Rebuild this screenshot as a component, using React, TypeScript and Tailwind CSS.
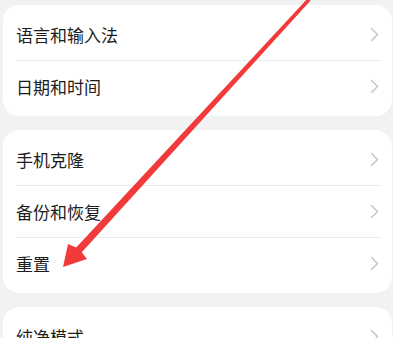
import { Fragment } from 'react';

interface Group {
  items: string[];
}

const GROUPS: Group[] = [
  { items: ['语言和输入法', '日期和时间'] },
  { items: ['手机克隆', '备份和恢复', '重置'] },
  { items: ['纯净模式'] },
];

function Chevron() {
  return (
    <svg width="9" height="15" viewBox="0 0 9 15" className="shrink-0">
      <polyline points="1.5,1.5 7.5,7.5 1.5,13.5" fill="none" stroke="#c6c6c6" strokeWidth="1.5" strokeLinecap="round" strokeLinejoin="round" />
    </svg>
  );
}

export default function App() {
  return (
    <div
      className="relative h-[338px] w-[393px] overflow-hidden bg-[#f1f2f4]"
      style={{ fontFamily: '"Noto Sans CJK SC", "Noto Sans", sans-serif' }}
    >
      <div className="flex flex-col gap-[14px] pl-[3px] pr-[1px] pt-[5px]">
        {GROUPS.map((group, gi) => (
          <div key={gi} className="rounded-[16px] bg-white py-[4px]">
            {group.items.map((label, i) => (
              <Fragment key={label}>
                {i > 0 && <div className="ml-[13px] mr-[10px] h-px bg-[#ebebeb]" />}
                <div className="flex h-[51px] items-center justify-between pl-[13px] pr-[13px]">
                  <span className="text-[17px] leading-none text-[#1c1c1c]">{label}</span>
                  <Chevron />
                </div>
              </Fragment>
            ))}
          </div>
        ))}
      </div>

      {/* red annotation arrow */}
      <svg className="pointer-events-none absolute inset-0" width="393" height="338" viewBox="0 0 393 338">
        <polygon
          points="307.6,-1.5 310.6,0.5 81.8,252.2 87,259 63,267 68,244 76.2,247.4"
          fill="#f23a3a"
        />
      </svg>
    </div>
  );
}
